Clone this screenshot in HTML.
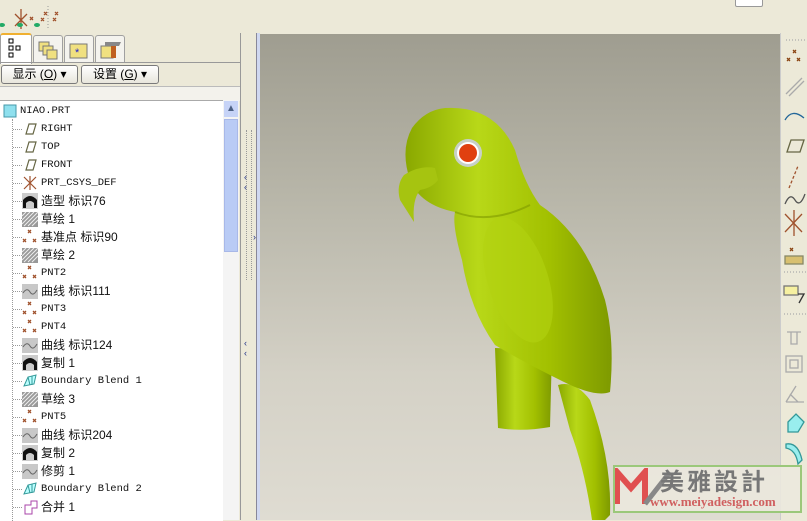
<!DOCTYPE html>
<html><head><meta charset="utf-8">
<style>
body{margin:0;width:807px;height:520px;overflow:hidden;background:#ece9d8;position:relative;font-family:"Liberation Sans","Noto Sans CJK SC",sans-serif}
.abs{position:absolute}
.tab{position:absolute;top:35px;width:28px;height:26px;border:1px solid #a0a0a0;border-bottom:none;background:#f4f3ee;border-radius:3px 3px 0 0}
.btn{position:absolute;top:65px;height:17px;border:1px solid #7a7a7a;border-radius:3px;background:linear-gradient(#fff,#e8e6dc);font-size:12px;line-height:17px;text-align:center;color:#000}
.row{position:absolute;left:0;height:18px;font-size:12px;line-height:18px;white-space:nowrap}
.row .t{position:absolute;left:41px;top:0;font-family:"Liberation Mono","Noto Sans CJK SC",monospace;font-size:10.5px;color:#111}
.row .t.c{font-family:"Liberation Sans","Noto Sans CJK SC",sans-serif;font-size:12px;font-weight:normal}
.row .ic{position:absolute;left:22px;top:1px;width:16px;height:16px}
.dot{position:absolute;left:12px;border-left:1px dotted #999}
.hd{position:absolute;left:13px;width:9px;border-top:1px dotted #999;top:9px}
</style></head><body>
<svg class="abs" style="left:0;top:0" width="80" height="32">
<g stroke="#a0522d" stroke-width="1.3" fill="none">
<path d="M15 14l12 12M27 14l-12 12M21 9v20"/>
<path d="M30 17l3 3M33 17l-3 3M44 12l3 3M47 12l-3 3M41 18l3 3M44 18l-3 3M55 12l3 3M58 12l-3 3M53 18l3 3M56 18l-3 3"/>
</g>
<ellipse cx="2" cy="25" rx="3" ry="2" fill="#2a6"/><ellipse cx="20" cy="25" rx="3" ry="2" fill="#2a6"/><ellipse cx="37" cy="25" rx="3" ry="2" fill="#2a6"/>
<line x1="48" y1="6" x2="48" y2="30" stroke="#999" stroke-dasharray="1 2"/>
</svg>
<div class="abs" style="left:735px;top:-2px;width:26px;height:7px;border:1px solid #999;background:#fff;border-radius:2px"></div>
<div class="tab" style="left:0;top:33px;height:29px;width:30px;background:#fff;border-top:2px solid #f0b030"></div>
<svg class="abs" style="left:8px;top:38px" width="14" height="20"><g fill="none" stroke="#000"><rect x="1" y="1" width="4" height="4"/><rect x="1" y="8" width="4" height="4"/><rect x="8" y="8" width="4" height="4"/><rect x="1" y="15" width="4" height="4"/></g></svg>
<div class="tab" style="left:33px"></div>
<svg class="abs" style="left:37px;top:40px" width="22" height="20"><rect x="2" y="2" width="10" height="9" fill="#f0e080" stroke="#777"/><rect x="6" y="6" width="10" height="9" fill="#f0e080" stroke="#777"/><rect x="10" y="10" width="10" height="9" fill="#f0e080" stroke="#777"/></svg>
<div class="tab" style="left:64px"></div>
<svg class="abs" style="left:68px;top:40px" width="22" height="20"><rect x="2" y="4" width="17" height="14" fill="#f0e080" stroke="#777"/><text x="7" y="16" font-size="11" fill="#22c">*</text></svg>
<div class="tab" style="left:95px"></div>
<svg class="abs" style="left:99px;top:38px" width="24" height="22"><rect x="2" y="8" width="12" height="12" fill="#f0e080" stroke="#777"/><rect x="12" y="6" width="5" height="14" fill="#c06020"/><path d="M6 4h16l-2 4H6z" fill="#888"/></svg>
<div class="abs" style="left:0;top:62px;width:241px;border-top:1px solid #999"></div>
<div class="btn" style="left:1px;width:75px">显示 (<u>O</u>) ▾</div>
<div class="btn" style="left:81px;width:76px">设置 (<u>G</u>) ▾</div>
<div class="abs" style="left:0;top:86px;width:240px;height:14px;background:#f3f2ec;border-top:1px solid #bbb"></div>
<div class="abs" style="left:0;top:100px;width:223px;height:420px;background:#fff;border-top:1px solid #aaa">
<div class="dot" style="top:18px;height:402px"></div>
</div>
<div class="abs" style="left:223px;top:100px;width:16px;height:420px;background:#f4f4f4">
<div class="abs" style="left:1px;top:1px;width:14px;height:16px;background:#c6d3f7;color:#4d6185;font-size:10px;text-align:center;line-height:16px">▲</div>
<div class="abs" style="left:1px;top:19px;width:14px;height:133px;background:#b9cbf5;border:1px solid #a8b8e8;box-sizing:border-box"></div>
</div>
<div class="abs" style="left:240px;top:33px;width:18px;height:487px;background:#ece9d8;border-left:1px solid #999"></div>
<div class="abs" style="left:246px;top:130px;width:4px;height:150px;border-left:1px dotted #999;border-right:1px dotted #999"></div>
<div class="abs" style="left:244px;top:172px;font-size:9px;color:#223388">‹<br>‹</div>
<div class="abs" style="left:253px;top:232px;font-size:9px;color:#223388">›</div>
<div class="abs" style="left:244px;top:338px;font-size:9px;color:#223388">‹<br>‹</div>
<div class="abs" style="left:256px;top:33px;width:3px;height:487px;background:#d0d8f0;border-left:1px solid #889"></div>

<div id="tree">
<div class="row" style="top:102px"><svg class="ic" style="left:3px" viewBox="0 0 16 16"><rect x="1" y="2" width="12" height="12" fill="#8fe0ee" stroke="#49a"/></svg><span class="t" style="left:20px">NIAO.PRT</span></div>
</div>
<script>
var rows=[["pl","RIGHT"],["pl","TOP"],["pl","FRONT"],["cs","PRT_CSYS_DEF"],["bk","造型 标识76",1],["sk","草绘 1",1],["pt","基准点 标识90",1],["sk","草绘 2",1],["pt","PNT2"],["cv","曲线 标识111",1],["pt","PNT3"],["pt","PNT4"],["cv","曲线 标识124",1],["bk","复制 1",1],["bb","Boundary Blend 1"],["sk","草绘 3",1],["pt","PNT5"],["cv","曲线 标识204",1],["bk","复制 2",1],["cv","修剪 1",1],["bb","Boundary Blend 2"],["mg","合并 1",1]];
var ic={pl:'<path d="M4 13L7 3H14L11 13Z" fill="none" stroke="#664" stroke-width="1.2"/>',
cs:'<path d="M2 2L14 14M14 2L2 14M8 1V15" stroke="#a0522d" stroke-width="1.2"/>',
bk:'<rect x="0" y="0" width="16" height="16" fill="#ccc"/><path d="M1 15V7Q8 -1 15 7V15H12V10Q8 6 4 10V15Z" fill="#111"/>',
sk:'<rect x="0" y="1" width="16" height="15" fill="#999"/><path d="M0 5L4 1M0 9L8 1M0 13L12 1M2 15L16 1M6 15L16 5M10 15L16 9" stroke="#eee"/>',
pt:'<path d="M6 1l3 3M9 1l-3 3M1 10l3 3M4 10l-3 3M11 10l3 3M14 10l-3 3" stroke="#a0522d" stroke-width="1.3"/>',
cv:'<rect x="0" y="1" width="16" height="15" fill="#c8c8c8"/><path d="M1 10Q5 4 8 9T15 7" fill="none" stroke="#666"/>',
bb:'<path d="M2 13L6 4L14 2L12 11Z" fill="#bff" stroke="#399"/><path d="M6 4L8 12M10 3L10 12" stroke="#399"/>',
mg:'<path d="M3 6H9V2H15V9H10V15H3Z" fill="#fff" stroke="#a4a"/>'};
var h='';rows.forEach(function(r,i){var y=120+i*18;h+='<div class="row" style="top:'+y+'px;width:222px"><div class="hd"></div><svg class="ic" viewBox="0 0 16 16">'+ic[r[0]]+'</svg><span class="t'+(r[2]?' c':'')+'">'+r[1]+'</span></div>';});
document.getElementById('tree').insertAdjacentHTML('beforeend',h);
</script>
<div class="abs" style="left:260px;top:34px;width:520px;height:486px;background:linear-gradient(#9f9d90,#b9b7aa 35%,#d4d1c6 70%,#dfdcd2)"></div>
<svg class="abs" style="left:0;top:0" width="807" height="520">
<defs>
<linearGradient id="g" x1="0" y1="0" x2="1" y2="0"><stop offset="0" stop-color="#8aa800"/><stop offset="0.35" stop-color="#b8d818"/><stop offset="0.7" stop-color="#a2c000"/><stop offset="1" stop-color="#7e9a00"/></linearGradient>
</defs>
<path d="M558 385Q575 380 590 400Q612 460 610 515L605 520H592Q585 470 570 430Z" fill="url(#g)"/>
<path d="M495 348L552 350L550 427Q522 432 498 428Z" fill="url(#g)"/>
<path d="M445 108Q495 105 515 150Q525 185 540 205Q585 235 605 300Q615 340 610 392Q595 398 560 380Q520 360 495 345Q470 310 462 260Q452 225 455 212Q420 205 410 180Q400 150 412 128Q425 110 445 108Z" fill="url(#g)"/>
<path d="M435 168Q420 165 404 175Q396 185 400 200L414 222Q412 200 420 190Q432 188 438 180Z" fill="#a6c410"/>
<path d="M455 212Q490 225 530 205" fill="none" stroke="#7e9a00" stroke-width="2" opacity=".6"/>
<ellipse cx="518" cy="280" rx="30" ry="65" transform="rotate(-18 518 280)" fill="#b2d210" opacity=".6"/>
<circle cx="468" cy="153" r="14" fill="#c8d0c8"/><circle cx="468" cy="153" r="11" fill="#fff"/><circle cx="468" cy="153" r="9" fill="#e04010"/>
</svg>
<div class="abs" style="left:780px;top:33px;width:27px;height:487px;background:#ece9d8;border-left:1px solid #ccc"></div>
<svg class="abs" style="left:782px;top:36px" width="25" height="470">
<g fill="none" stroke-width="1.3">
<path d="M4 4h20" stroke="#aaa" stroke-dasharray="1 2"/>
<path d="M11 14l3 3M14 14l-3 3M5 22l3 3M8 22l-3 3M15 22l3 3M18 22l-3 3" stroke="#8b4513"/>
<path d="M4 58L20 42M7 60L22 45" stroke="#aaa"/>
<path d="M3 84Q10 72 22 82" stroke="#269"/>
<path d="M5 116L9 104H22L18 116Z" stroke="#664"/>
<path d="M7 152L16 130" stroke="#a0522d" stroke-dasharray="3 2"/>
<path d="M3 168Q8 156 13 164T23 158" stroke="#555"/>
<path d="M3 178L20 196M20 178L3 196M12 174V200" stroke="#a0522d"/>
<rect x="3" y="220" width="18" height="8" fill="#d8c070" stroke="#886"/>
<path d="M8 212l3 3M11 212l-3 3" stroke="#8b4513"/>
<path d="M2 236h22" stroke="#aaa" stroke-dasharray="1 2"/>
<rect x="2" y="250" width="14" height="9" fill="#f6f0a0" stroke="#777"/><path d="M16 258h6l-5 9" stroke="#333"/>
<path d="M2 278h22" stroke="#aaa" stroke-dasharray="1 2"/>
<path d="M5 296h14M9 296v12h6v-12" stroke="#aaa"/>
<rect x="4" y="320" width="16" height="16" stroke="#aaa"/><rect x="8" y="324" width="8" height="8" stroke="#aaa"/>
<path d="M4 366L14 350M4 366h18M8 358l8 8" stroke="#aaa"/>
<path d="M6 386l8-8 8 8-6 10H6Z" fill="#9ee" stroke="#399"/>
<path d="M4 408Q16 406 20 424L16 428Q14 414 4 412Z" fill="#9ee" stroke="#399"/>
</g>
</svg>
<div class="abs" style="left:613px;top:465px;width:189px;height:48px;background:rgba(236,233,222,.85);border:2px solid #9bc87a;box-sizing:border-box"></div>
<svg class="abs" style="left:615px;top:468px" width="60" height="40"><path d="M2 36V4L16 20L30 4V36" fill="none" stroke="#e05050" stroke-width="6"/><path d="M30 36L55 4" stroke="#888" stroke-width="5"/></svg>
<div class="abs" style="left:660px;top:466px;font-size:24px;font-weight:bold;color:#777;letter-spacing:3px;font-family:'Noto Sans CJK SC',sans-serif;line-height:28px">美雅設計</div>
<div class="abs" style="left:650px;top:494px;font-size:13px;font-weight:bold;color:#d06060;font-family:'Liberation Serif',serif">www.meiyadesign.com</div>
</body></html>
